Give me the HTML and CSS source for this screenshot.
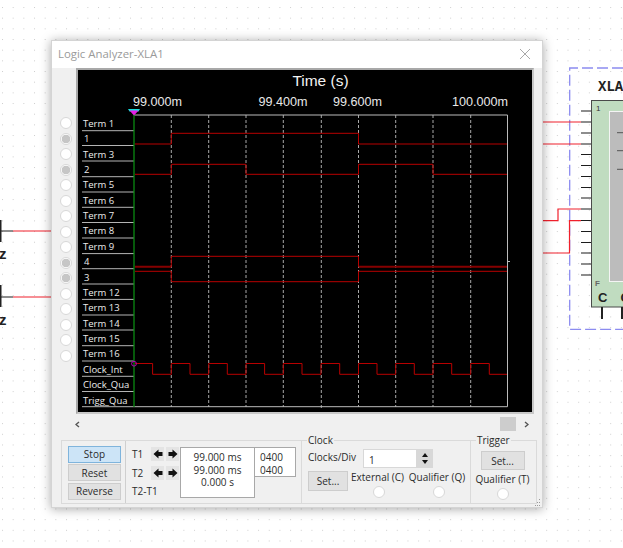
FILE: index.html
```html
<!DOCTYPE html>
<html lang="en">
<head>
<meta charset="utf-8">
<title>Logic Analyzer-XLA1</title>
<link rel="stylesheet" href="styles.css">
</head>
<body>
<main class="desk">
  <svg class="schematic" width="623" height="548" viewBox="0 0 623 548">
    <defs>
      <pattern id="dots" x="2" y="7" width="10.67" height="10.67" patternUnits="userSpaceOnUse">
        <rect width="1" height="1" class="dot"/>
      </pattern>
    </defs>
    <rect width="623" height="548" fill="url(#dots)"/>
    <path class="wire-black" d="M0 231H13M0 297H13"/>
    <path class="wire-thick" d="M0.5 220V242M0.5 285V307"/>
    <path class="wire-red" d="M13 231H51M13 297H51"/>
    <text class="src-label" x="-1" y="259">z</text>
    <text class="src-label" x="-1" y="325">z</text>
    <path class="dash-box" d="M623 68H569.7V329.3H623"/>
    <text class="xla" x="598" y="91">XLA</text>
    <rect class="chip" x="591.5" y="100.5" width="40" height="206.5"/>
    <rect class="chip-inner" x="609.5" y="111.5" width="20" height="170"/>
    <path class="wire-black" d="M581 111H591M581 122H591M581 133H591M581 144H591M581 154.5H591M581 165.5H591M581 176.5H591M581 187.5H591M581 198H591M581 209H591M581 220.5H591M581 231.5H591M581 242.5H591M581 253H591M581 264H591M581 275H591"/>
    <path class="tick" d="M617 132.7H623M617 150.7H623M617 169.3H623"/>
    <path class="wire-red" d="M543 122H581M543 144H581M543 220.7H558V209H581M543 253H569.5V220.7H581"/>
    <path class="wire-thick" d="M602 307V319M622 307V319"/>
    <text class="pin-num" x="596" y="111">1</text>
    <text class="pin-f" x="595" y="286">F</text>
    <text class="pin-c" x="598" y="302">C</text>
    <text class="pin-c" x="620.5" y="302">C</text>
  </svg>

  <section class="window">
    <header class="titlebar">
      <h1 class="title">Logic Analyzer-XLA1</h1>
      <svg class="close" width="10" height="10" viewBox="0 0 10 10"><path d="M0 0L10 10M10 0L0 10"/></svg>
    </header>

    <div class="main">
      <div class="radios">
        <span class="radio"></span><span class="radio on"></span><span class="radio"></span><span class="radio on"></span>
        <span class="radio"></span><span class="radio"></span><span class="radio"></span><span class="radio"></span>
        <span class="radio"></span><span class="radio on"></span><span class="radio on"></span><span class="radio"></span>
        <span class="radio"></span><span class="radio"></span><span class="radio"></span><span class="radio"></span>
      </div>
      <div class="plot-frame">
        <svg class="plot" width="454" height="342" viewBox="78 70 454 342">
          <text class="time" x="320.5" y="86">Time (s)</text>
          <text class="axis" x="133" y="106">99.000m</text>
          <text class="axis" x="258.5" y="106">99.400m</text>
          <text class="axis" x="333" y="106">99.600m</text>
          <text class="axis" x="452" y="106">100.000m</text>

          <path class="dashes" d="M171.3 115V407M208.7 115V407M246 115V407M283.3 115V407M321.3 115V409M358.5 115V407M395.7 115V407M433 115V407M470.7 115V407"/>
          <path class="frame" d="M134 115H507.5V406.7H134"/>
          <path class="frame" d="M507.5 261.5H510"/>
          <path class="rows" d="M82 130.7H134M82 145.5H134M82 161H134M82 176.7H134M82 192H134M82 207.3H134M82 222.5H134M82 238H134M82 253.6H134M82 268.7H134M82 284H134M82 299.4H134M82 315H134M82 330H134M82 345.7H134M82 361H134M82 376.3H134M82 391.5H134M82 406.7H134"/>

          <text class="term" x="83" y="127">Term 1</text>
          <text class="term" x="84" y="142">1</text>
          <text class="term" x="83" y="158">Term 3</text>
          <text class="term" x="84" y="173">2</text>
          <text class="term" x="83" y="188">Term 5</text>
          <text class="term" x="83" y="204">Term 6</text>
          <text class="term" x="83" y="219">Term 7</text>
          <text class="term" x="83" y="234">Term 8</text>
          <text class="term" x="83" y="250">Term 9</text>
          <text class="term" x="84" y="265">4</text>
          <text class="term" x="84" y="281">3</text>
          <text class="term" x="83" y="296">Term 12</text>
          <text class="term" x="83" y="311">Term 13</text>
          <text class="term" x="83" y="327">Term 14</text>
          <text class="term" x="83" y="342">Term 15</text>
          <text class="term" x="83" y="357">Term 16</text>
          <text class="term" x="83" y="373">Clock_Int</text>
          <text class="term" x="83" y="388">Clock_Qua</text>
          <text class="term" x="83" y="404">Trigg_Qua</text>

          <path class="signal" d="M135 144H171.3V133.3H358.5V144H507"/>
          <path class="signal" d="M135 174.3H171.3V164.3H246V174.3H358.5V164.3H433V174.3H507"/>
          <path class="signal thick" d="M135 266.7H171.3"/>
          <path class="signal" d="M171.3 266.7V256.3H358.5V266.7"/>
          <path class="signal thick" d="M358.5 266.7H507"/>
          <path class="signal" d="M135 271.3H171.3V281.7H358.5V271.3H507"/>
          <path class="signal" d="M135 363.5H152.6V374.3H171.3V363.5H190V374.3H208.7V363.5H227.3V374.3H246V363.5H264.6V374.3H283.3V363.5H302V374.3H321V363.5H339.7V374.3H358.5V363.5H377V374.3H395.7V363.5H414.3V374.3H433V363.5H451.7V374.3H470.7V363.5H489.3V374.3H507"/>

          <path class="green" d="M134 113V407"/>
          <circle class="marker" cx="134" cy="363.7" r="2.4"/>
          <path class="cursor-a" d="M128 109H140L138.5 111.5H129.5Z"/>
          <path class="cursor-b" d="M129.5 110.5H138.5L134 115.5Z"/>
        </svg>
      </div>
    </div>

    <div class="hscroll">
      <svg class="chev" width="5" height="7" viewBox="0 0 5 7"><path d="M4 1L1 3.5L4 6"/></svg>
      <span class="spacer"></span>
      <span class="thumb"></span>
      <svg class="chev chev-r" width="5" height="7" viewBox="0 0 5 7"><path d="M1 1L4 3.5L1 6"/></svg>
    </div>

    <div class="controls">
      <div class="group group-cursors">
        <div class="run-btns">
          <button class="btn btn-run active">Stop</button>
          <button class="btn btn-run">Reset</button>
          <button class="btn btn-run">Reverse</button>
        </div>
        <div class="cursors">
          <div class="cursor-names">
            <div class="t-row">
              <span class="t-label">T1</span>
              <span class="arrow"><svg width="10" height="10" viewBox="0 0 10 10"><path d="M5.5 0.5L0.5 5L5.5 9.5V7H9.5V3H5.5Z"/></svg></span>
              <span class="arrow"><svg width="10" height="10" viewBox="0 0 10 10"><path d="M4.5 0.5L9.5 5L4.5 9.5V7H0.5V3H4.5Z"/></svg></span>
            </div>
            <div class="t-row t-row-2">
              <span class="t-label">T2</span>
              <span class="arrow"><svg width="10" height="10" viewBox="0 0 10 10"><path d="M5.5 0.5L0.5 5L5.5 9.5V7H9.5V3H5.5Z"/></svg></span>
              <span class="arrow"><svg width="10" height="10" viewBox="0 0 10 10"><path d="M4.5 0.5L9.5 5L4.5 9.5V7H0.5V3H4.5Z"/></svg></span>
            </div>
            <span class="t-diff">T2-T1</span>
          </div>
          <div class="readout">
            <span>99.000 ms</span>
            <span>99.000 ms</span>
            <span>0.000 s</span>
          </div>
          <div class="hexout">
            <span>0400</span>
            <span>0400</span>
          </div>
        </div>
      </div>

      <div class="group group-clock">
        <span class="legend">Clock</span>
        <div class="clock-top">
          <span class="clk-label">Clocks/Div</span>
          <div class="spin">
            <span class="spin-value">1</span>
            <span class="spin-btns">
              <span class="spin-up"></span>
              <span class="spin-down"></span>
            </span>
          </div>
        </div>
        <div class="clock-bottom">
          <button class="btn btn-set">Set...</button>
          <div class="opt opt-ext"><span>External (C)</span><span class="radio radio-shift"></span></div>
          <div class="opt opt-qual"><span>Qualifier (Q)</span><span class="radio radio-shift"></span></div>
        </div>
      </div>

      <div class="group group-trigger">
        <span class="legend">Trigger</span>
        <button class="btn btn-trig">Set...</button>
        <div class="opt"><span>Qualifier (T)</span><span class="radio"></span></div>
      </div>
    </div>

    <svg class="grip" width="6" height="7" viewBox="0 0 6 7"><path d="M4 0h1v1H4zM2 3h1v1H2zM4 3h1v1H4zM0 6h1v1H0zM2 6h1v1H2zM4 6h1v1H4z"/></svg>
  </section>
</main>
</body>
</html>
```

FILE: styles.css
```css
* { box-sizing: border-box; }

html, body {
  margin: 0;
  padding: 0;
  background: #fff;
}

body {
  font-family: "Open Sans", "Liberation Sans", sans-serif;
  font-size: 10px;
  color: #2b2b2b;
  overflow: hidden;
}

.desk {
  position: relative;
  width: 623px;
  height: 548px;
  overflow: hidden;
}

/* schematic canvas */
.schematic { position: absolute; left: 0; top: 0; }
.dot { fill: #cfcfcf; }
.wire-black { stroke: #1c1c1c; stroke-width: 1.2; fill: none; }
.wire-thick { stroke: #222; stroke-width: 2; fill: none; }
.wire-red { stroke: #f0202c; stroke-width: 1.2; fill: none; }
.dash-box { stroke: #8c8cf0; stroke-width: 1.3; stroke-dasharray: 11 4; fill: none; }
.src-label { font: bold 15px "Liberation Sans", sans-serif; fill: #222; }
.xla { font: bold 14px "Liberation Mono", monospace; fill: #222; }
.chip { fill: #c0dcc0; stroke: #4a4a4a; stroke-width: 1; }
.chip-inner { fill: #bcbcbc; stroke: #f4f4f4; stroke-width: 1; }
.tick { stroke: #555; stroke-width: 1; fill: none; }
.pin-num { font: 8px "Liberation Sans", sans-serif; fill: #333; }
.pin-f { font: bold 8px "Liberation Sans", sans-serif; fill: #666; }
.pin-c { font: bold 13px "Liberation Sans", sans-serif; fill: #222; }

/* window */
.window {
  position: absolute;
  left: 51px;
  top: 40px;
  width: 492px;
  height: 468px;
  background: #f0f0f0;
  border: 1px solid #d4d4d4;
  box-shadow: 0 1px 10px rgba(0, 0, 0, 0.35);
}

.titlebar {
  height: 27px;
  background: #fff;
  display: flex;
  align-items: center;
  justify-content: space-between;
  padding: 0 12px 2px 6px;
}

.title {
  margin: 0;
  font-family: "Open Sans", sans-serif;
  font-size: 11.4px;
  font-weight: 400;
  color: #9a9a9a;
}

.close path { stroke: #a8a8a8; stroke-width: 1; fill: none; }

.main { display: flex; height: 346px; }

.radios {
  width: 24px;
  display: flex;
  flex-direction: column;
  align-items: center;
  gap: 3.53px;
  padding: 49px 0 0 1px;
  margin-left: 1px;
}

.radio {
  display: block;
  width: 12px;
  height: 12px;
  flex: none;
  border-radius: 50%;
  background: #fff;
  border: 1px solid #d8d8d8;
}

.radio.on {
  background: radial-gradient(circle, #c6c6c6 0 4px, #fff 4.6px);
}

.radio-shift { margin-left: 3px; }

.plot-frame {
  width: 458px;
  height: 346px;
  margin-left: -1px;
  border: 2px solid #a8a8a8;
  border-right-color: #c8c8c8;
  border-bottom-color: #c8c8c8;
  background: #000;
}

.plot { display: block; }

.time { font: 15.5px "Liberation Sans", sans-serif; fill: #f2f2f2; text-anchor: middle; }
.axis { font: 12.6px "Liberation Sans", sans-serif; fill: #e8e8e8; }
.term { font: 9.5px "Open Sans", sans-serif; fill: #ececec; }
.dashes { stroke: #a8a8a8; stroke-width: 1; stroke-dasharray: 3 2; fill: none; }
.frame { stroke: #bcbcbc; stroke-width: 1; fill: none; }
.rows { stroke: #b4b4b4; stroke-width: 1; fill: none; }
.signal { stroke: #b80000; stroke-width: 1; fill: none; }
.signal.thick { stroke: #860000; stroke-width: 2; }
.green { stroke: #0a8a12; stroke-width: 1.3; fill: none; }
.marker { fill: none; stroke: #b400b4; stroke-width: 1; }
.cursor-a { fill: #19dcdc; }
.cursor-b { fill: #e61ee6; }

/* scrollbar */
.hscroll {
  height: 18px;
  display: flex;
  align-items: center;
  padding: 2px 0 0 23px;
}
.spacer { flex: 1; }
.thumb {
  width: 16px;
  height: 14px;
  background: #cdcdcd;
  margin-right: 8px;
}
.chev path { stroke: #555; stroke-width: 1.4; fill: none; }
.chev-r { margin-right: 13px; }

/* controls */
.controls {
  display: flex;
  margin: 8px 0 0 9px;
  width: 476px;
  height: 64px;
}

.group {
  position: relative;
  border: 1px solid #dadada;
  flex: none;
}

.group-cursors { width: 241px; display: flex; }
.group-clock { width: 169px; border-left: 0; padding: 8px 0 0 6px; }
.group-trigger { width: 66px; border-left: 0; display: flex; flex-direction: column; align-items: center; padding: 10px 2px 0 0; }

.legend {
  position: absolute;
  left: 5px;
  top: -7px;
  padding: 0 1px;
  background: #f0f0f0;
  line-height: 12px;
}

.btn {
  display: block;
  padding: 0;
  font: inherit;
  color: inherit;
  background: #e1e1e1;
  border: 1px solid #cdcdcd;
  border-radius: 0;
}

.run-btns {
  width: 64px;
  border-right: 1px solid #cfcfcf;
  display: flex;
  flex-direction: column;
  gap: 1.7px;
  padding: 4.5px 0 0 5.7px;
  flex: none;
}
.btn-run { width: 53.5px; height: 17px; }
.btn-run.active { background: #cce4f7; border-color: #7fb4dc; }

.cursors { display: flex; padding-top: 6px; }

.cursor-names { width: 54px; padding-left: 6px; flex: none; }
.t-row { display: flex; align-items: center; height: 14px; }
.t-row-2 { margin-top: 5px; }
.t-label { width: 19px; flex: none; }
.arrow {
  width: 13px;
  height: 14px;
  margin-right: 2px;
  background: #e4e4e4;
  display: flex;
  align-items: center;
  justify-content: center;
  flex: none;
}
.arrow path { fill: #111; }
.t-diff { display: block; margin-top: 4px; line-height: 14px; }

.readout, .hexout {
  background: #fff;
  border: 1px solid #e6e6e6;
  border-right-color: #a8a8a8;
  border-bottom-color: #a8a8a8;
  display: flex;
  flex-direction: column;
  flex: none;
  line-height: 12.5px;
}
.readout {
  width: 75px;
  height: 51px;
  align-items: center;
  padding-top: 3px;
  border-left-color: #a8a8a8;
  border-top-color: #a8a8a8;
}
.hexout {
  width: 41px;
  height: 30px;
  padding: 3px 0 0 5px;
  border-top-color: #a8a8a8;
  border-left: 0;
}

.clock-top { display: flex; align-items: center; height: 19px; }
.clk-label { width: 55px; flex: none; padding-bottom: 3px; }
.spin { display: flex; width: 70px; height: 19px; }
.spin-value {
  width: 54px;
  background: #fff;
  border: 1px solid #d8d8d8;
  padding: 3px 0 0 5px;
  line-height: 14px;
}
.spin-btns {
  width: 16px;
  background: #d8d8d8;
  display: flex;
  flex-direction: column;
  align-items: center;
  justify-content: center;
  gap: 3px;
}
.spin-up, .spin-down { width: 0; height: 0; border-left: 3.5px solid transparent; border-right: 3.5px solid transparent; }
.spin-up { border-bottom: 4px solid #111; }
.spin-down { border-top: 4px solid #111; }

.clock-bottom { display: flex; margin-top: 2px; }
.btn-set { width: 40px; height: 20px; margin-top: 1px; margin-right: 3px; flex: none; }
.opt {
  display: flex;
  flex-direction: column;
  align-items: center;
  gap: 2px;
  line-height: 14px;
  white-space: nowrap;
  flex: none;
}
.opt-ext { width: 53px; }
.opt-qual { width: 56px; margin-left: 5px; }

.btn-trig { width: 44px; height: 19px; margin-bottom: 2px; }

.grip { position: absolute; right: 1px; bottom: 1px; }
.grip path { fill: #9a9a9a; }
```
